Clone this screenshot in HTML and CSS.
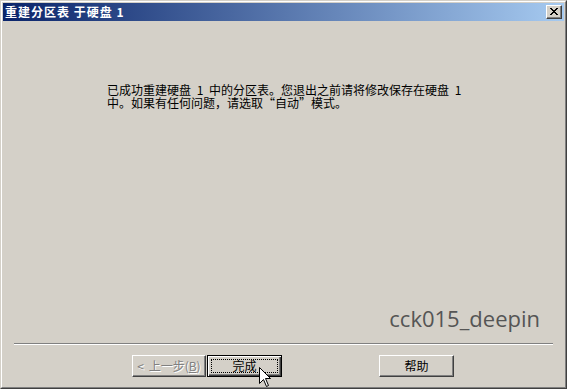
FILE: index.html
```html
<!DOCTYPE html>
<html lang="zh-CN">
<head>
<meta charset="utf-8">
<title>重建分区表 于硬盘 1</title>
<link rel="stylesheet" href="styles.css">
</head>
<body>
<div class="window">
  <div class="frame">
    <div class="titlebar">
      <span class="title">重建分区表 于硬盘 1</span>
      <button class="close" type="button" aria-label="关闭">
        <svg width="8" height="7" viewBox="0 0 8 7"><path d="M0 0h2v1h1v1h2v-1h1v-1h2v1h-1v1h-1v1h-1v1h1v1h1v1h1v1h-2v-1h-1v-1h-2v1h-1v1h-2v-1h1v-1h1v-1h1v-1h-1v-1h-1v-1h-1z" fill="#000"/></svg>
      </button>
    </div>
    <div class="body">
      <div class="message">
        <div class="line">已成功重建硬盘 1 中的分区表。您退出之前请将修改保存在硬盘 1</div>
        <div class="line">中。如果有任何问题，请选取<span class="q open">“</span>自动<span class="q close-q">”</span>模式。</div>
      </div>
      <div class="watermark">cck015_deepin</div>
    </div>
    <div class="separator"></div>
    <div class="buttons">
      <button class="btn disabled" type="button">&lt; 上一步(<u>B</u>)</button>
      <button class="btn default" type="button"><span class="focus">完成</span></button>
      <button class="btn help" type="button">帮助</button>
    </div>
  </div>
  <svg class="cursor" width="13" height="21" viewBox="0 0 13 21"><path d="M0.5 0.5 L0.5 16.5 L4.5 12.5 L7.5 19.5 L9.5 18.5 L6.5 11.5 L11.5 11.5 Z" fill="#fff" stroke="#000" stroke-width="1"/></svg>
</div>
</body>
</html>
```

FILE: styles.css
```css
html, body {
  margin: 0;
  padding: 0;
  background: #d4d0c8;
}

.window {
  position: relative;
  width: 567px;
  height: 389px;
  box-sizing: border-box;
  border: 1px solid;
  border-color: #d4d0c8 #404040 #404040 #d4d0c8;
  background: #d4d0c8;
  font-family: "Noto Sans CJK SC", "Noto Sans", sans-serif;
  font-size: 12px;
  color: #000;
}

.frame {
  height: 100%;
  box-sizing: border-box;
  border: 1px solid;
  border-color: #fff #808080 #808080 #fff;
  padding: 1px;
  display: flex;
  flex-direction: column;
}

.titlebar {
  height: 18px;
  flex: none;
  display: flex;
  align-items: center;
  justify-content: space-between;
  padding: 0 2px 0 2px;
  background: linear-gradient(to right, #0a246a, #a6caf0);
}

.title {
  color: #fff;
  font-weight: bold;
  font-size: 12px;
  letter-spacing: 1px;
  line-height: 18px;
  white-space: pre;
}

.close {
  width: 16px;
  height: 14px;
  margin: 0;
  padding: 0;
  box-sizing: border-box;
  background: #d4d0c8;
  border: 1px solid;
  border-color: #fff #404040 #404040 #fff;
  box-shadow: inset -1px -1px 0 #808080;
  display: flex;
  align-items: center;
  justify-content: center;
}

.close svg {
  display: block;
  margin: 0 1px 1px 0;
}

.body {
  flex: 1;
  display: flex;
  flex-direction: column;
  justify-content: space-between;
  padding: 62px 24px 10px 104px;
}

.message {
  display: flex;
  flex-direction: column;
}

.line {
  height: 13px;
  line-height: 13px;
  word-spacing: 3px;
  white-space: pre;
}

.q {
  display: inline-block;
  width: 12px;
  height: 13px;
  line-height: 13px;
  vertical-align: top;
}

.q.open {
  text-align: right;
}

.q.close-q {
  text-align: left;
}

.watermark {
  align-self: flex-end;
  font-family: "Open Sans", sans-serif;
  font-size: 22px;
  line-height: 30px;
  color: #555;
}

.separator {
  flex: none;
  height: 0;
  margin: 0 11px;
  border-top: 1px solid #808080;
  border-bottom: 1px solid #fff;
}

.buttons {
  flex: none;
  display: flex;
  padding: 10px 0 9px 129px;
}

.btn {
  width: 75px;
  height: 22px;
  margin: 0;
  padding: 0;
  box-sizing: border-box;
  background: #d4d0c8;
  border: 1px solid;
  border-color: #fff #404040 #404040 #fff;
  box-shadow: inset -1px -1px 0 #808080;
  font-family: "Noto Sans CJK SC", "Noto Sans", sans-serif;
  font-size: 12px;
  line-height: 18px;
  color: #000;
  display: flex;
  align-items: center;
  justify-content: center;
}

.btn.disabled {
  width: 74px;
  margin-right: 1px;
  color: #808080;
  text-shadow: 1px 1px 0 #fff;
  white-space: pre;
  word-spacing: 2px;
}

.btn.default {
  border: 1px solid #000;
  box-shadow: inset 1px 1px 0 #fff, inset -1px -1px 0 #404040, inset -2px -2px 0 #808080;
  padding: 3px;
}

.focus {
  flex: 1;
  align-self: stretch;
  border: 1px dotted #000;
  display: flex;
  align-items: center;
  justify-content: center;
  line-height: 12px;
}

.btn.help {
  margin-left: 97px;
}

.cursor {
  position: absolute;
  left: 258px;
  top: 366px;
}
```
